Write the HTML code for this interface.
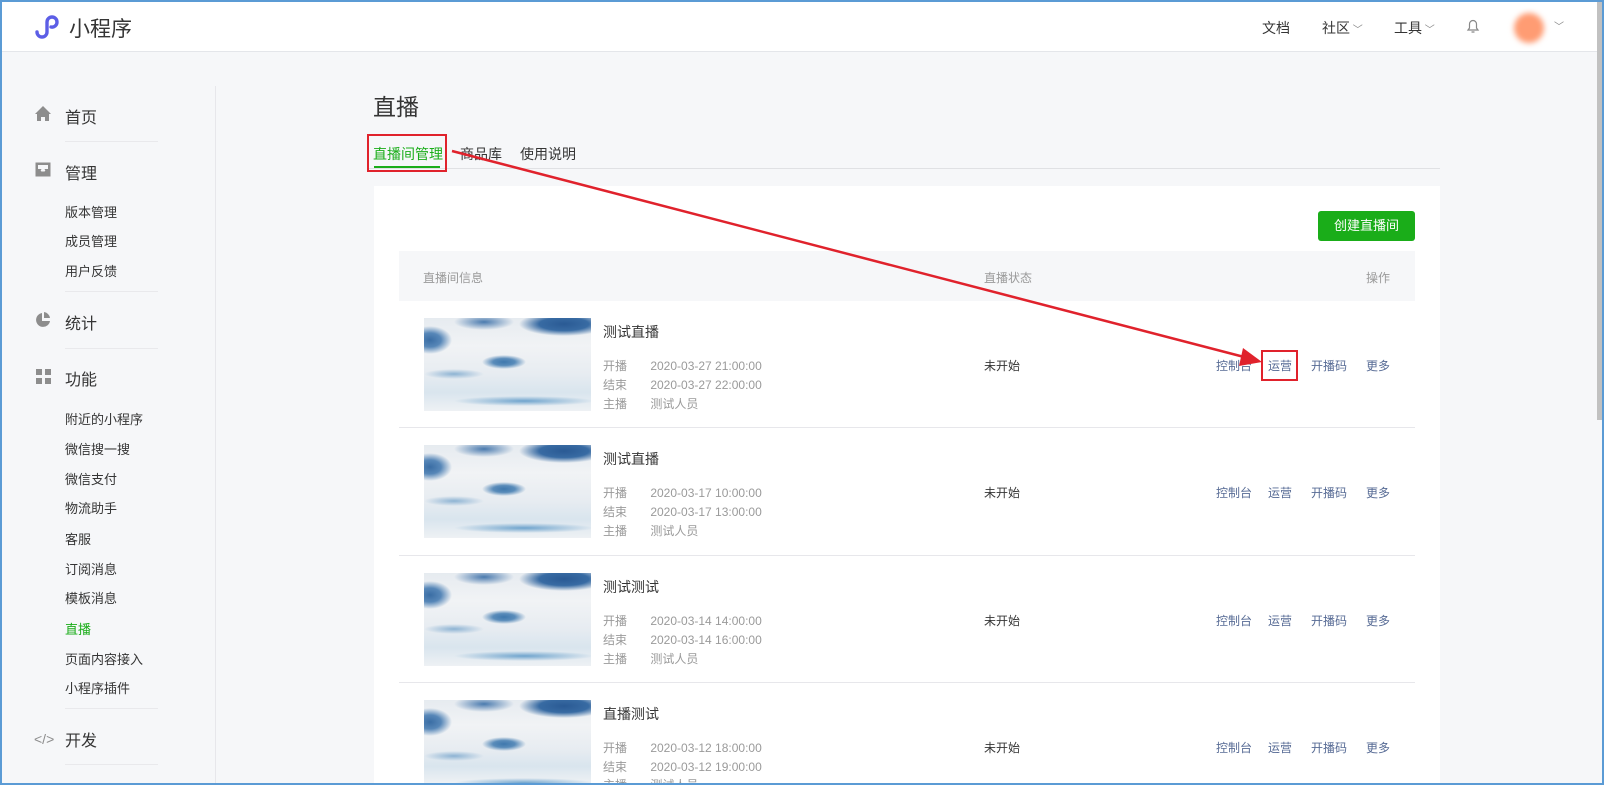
<!DOCTYPE html>
<html style="height:785px;overflow:hidden"><head><meta charset="utf-8"><style>
*{margin:0;padding:0;box-sizing:border-box}
body{width:1604px;height:785px;overflow:hidden;background:#f6f7f9;font-family:"Liberation Sans","Noto Sans CJK SC",sans-serif;position:relative;color:#353535}
.a{position:absolute;white-space:nowrap}
.hdr{left:0;top:0;width:1604px;height:52px;background:#fff;border-bottom:1px solid #e4e6ea}
.nav{font-size:14px;color:#353535;top:18px}
.side{font-size:16px;color:#353535}
.sub{font-size:13px;color:#353535}
.dv{height:1px;background:#e9e9ec;left:65px;width:93px}
.card{left:374px;top:186px;width:1066px;height:597px;background:#fff;overflow:hidden}
.th{left:399px;top:251px;width:1016px;height:50px;background:#f6f7f9}
.img{width:167px;height:93px;overflow:hidden;background:
radial-gradient(ellipse 22px 7px at 80px 44px,#3f78ad 0,#5a8cba 50%,transparent 100%),
radial-gradient(ellipse 45px 12px at 140px 6px,#2a5a94 0,#386ba3 55%,transparent 100%),
radial-gradient(ellipse 30px 8px at 60px 4px,#4a7aae 0,transparent 100%),
radial-gradient(ellipse 22px 14px at 6px 22px,#3a6da4 0,#5787b8 50%,transparent 100%),
radial-gradient(ellipse 30px 5px at 30px 56px,#8db3d3 0,transparent 100%),
radial-gradient(ellipse 70px 5px at 100px 83px,#6fa4cd 0,transparent 100%),
linear-gradient(180deg,#e6ebf0 0,#f1f3f5 30%,#e7ecf1 60%,#d9e5ee 80%,#eef1f4 100%)}
.t{font-size:14px;color:#353535}
.l{font-size:12px;color:#9a9a9a}
.op{font-size:12px;color:#576b95}
.st{font-size:12px;color:#353535}
.sep{left:399px;width:1016px;height:1px;background:#e7e7eb}
</style></head><body>
<div class="a hdr"></div>
<svg class="a" style="left:33px;top:12px" width="30" height="30" viewBox="0 0 30 30"><path d="M4 20a5 5 0 1 0 10 0V10a5 5 0 1 1 10 0a5 5 0 0 1-6 5" fill="none" stroke="#5c5ee6" stroke-width="3.4" stroke-linecap="round"/></svg>
<div class="a" style="left:69px;top:13px;font-size:21px;color:#353535">小程序</div>
<div class="a nav" style="left:1262px">文档</div>
<div class="a nav" style="left:1322px">社区<span style="font-size:10px;color:#888"> ﹀</span></div>
<div class="a nav" style="left:1394px">工具<span style="font-size:10px;color:#888"> ﹀</span></div>
<svg class="a" style="left:1466px;top:18px" width="14" height="16" viewBox="0 0 14 16"><path d="M2 12h10l-1.5-2V6a3.5 3.5 0 0 0-7 0v4zM5.5 14h3" fill="none" stroke="#888" stroke-width="1.2"/></svg>
<div class="a" style="left:1514px;top:13px;width:30px;height:30px;border-radius:50%;background:#ff9c73;filter:blur(3px)"></div>
<div class="a" style="left:1554px;top:18px;font-size:10px;color:#888">﹀</div>

<div class="a" style="left:215px;top:86px;width:1px;height:700px;background:#e7e7eb"></div>
<svg class="a" style="left:35px;top:106px" width="16" height="15" viewBox="0 0 16 15"><path d="M8 0L0 8h2v7h4v-4h4v4h4V8h2z" fill="#8d8d8d"/></svg>
<div class="a side" style="left:65px;top:104px">首页</div>
<div class="a dv" style="top:141px"></div>
<svg class="a" style="left:35px;top:162px" width="16" height="15" viewBox="0 0 16 15"><path d="M1 1h14v13H1zM1 8h4l1 2h4l1-2h4" fill="#8d8d8d" stroke="#8d8d8d"/><path d="M3 3h10v4h-3l-1 2H7L6 7H3z" fill="#f6f7f9"/></svg>
<div class="a side" style="left:65px;top:160px">管理</div>
<div class="a sub" style="left:65px;top:202px">版本管理</div>
<div class="a sub" style="left:65px;top:231px">成员管理</div>
<div class="a sub" style="left:65px;top:261px">用户反馈</div>
<div class="a dv" style="top:291px"></div>
<svg class="a" style="left:35px;top:312px" width="16" height="16" viewBox="0 0 16 16"><path d="M7 1a7 7 0 1 0 8 8H7z" fill="#8d8d8d"/><path d="M9 0v6h6A7 7 0 0 0 9 0z" fill="#8d8d8d"/></svg>
<div class="a side" style="left:65px;top:310px">统计</div>
<div class="a dv" style="top:348px"></div>
<svg class="a" style="left:36px;top:369px" width="15" height="15" viewBox="0 0 15 15"><path d="M0 0h6v6H0zM9 0h6v6H9zM0 9h6v6H0zM9 9h6v6H9z" fill="#8d8d8d"/></svg>
<div class="a side" style="left:65px;top:366px">功能</div>
<div class="a sub" style="left:65px;top:409px">附近的小程序</div>
<div class="a sub" style="left:65px;top:439px">微信搜一搜</div>
<div class="a sub" style="left:65px;top:469px">微信支付</div>
<div class="a sub" style="left:65px;top:498px">物流助手</div>
<div class="a sub" style="left:65px;top:529px">客服</div>
<div class="a sub" style="left:65px;top:559px">订阅消息</div>
<div class="a sub" style="left:65px;top:588px">模板消息</div>
<div class="a sub" style="left:65px;top:619px;color:#1aad19">直播</div>
<div class="a sub" style="left:65px;top:649px">页面内容接入</div>
<div class="a sub" style="left:65px;top:678px">小程序插件</div>
<div class="a dv" style="top:708px"></div>
<div class="a" style="left:34px;top:731px;font-size:14px;color:#8d8d8d">&lt;/&gt;</div>
<div class="a side" style="left:65px;top:727px">开发</div>
<div class="a dv" style="top:764px"></div>

<div class="a" style="left:373px;top:88px;font-size:23px;color:#353535">直播</div>
<div class="a" style="left:367px;top:168px;width:1073px;height:1px;background:#e0e1e4"></div>
<div class="a" style="left:373px;top:144px;font-size:14px;color:#1aad19">直播间管理</div>
<div class="a" style="left:374px;top:166px;width:66px;height:2px;background:#1aad19"></div>
<div class="a" style="left:367px;top:134px;width:80px;height:38px;border:2px solid #e0222c"></div>
<div class="a" style="left:460px;top:144px;font-size:14px">商品库</div>
<div class="a" style="left:520px;top:144px;font-size:14px">使用说明</div>

<div class="a card"></div>
<div class="a" style="left:1318px;top:211px;width:97px;height:30px;background:#1aad19;border-radius:3px;color:#fff;font-size:13px;text-align:center;line-height:30px">创建直播间</div>
<div class="a th"></div>
<div class="a l" style="left:423px;top:269px">直播间信息</div>
<div class="a l" style="left:984px;top:269px">直播状态</div>
<div class="a l" style="left:1366px;top:269px">操作</div>

<div class="a img" style="left:424px;top:318px"></div>
<div class="a t" style="left:603px;top:322px">测试直播</div>
<div class="a l" style="left:603px;top:357px">开播&nbsp;&nbsp;&nbsp;&nbsp;&nbsp;&nbsp;&nbsp;2020-03-27 21:00:00</div>
<div class="a l" style="left:603px;top:376px">结束&nbsp;&nbsp;&nbsp;&nbsp;&nbsp;&nbsp;&nbsp;2020-03-27 22:00:00</div>
<div class="a l" style="left:603px;top:395px">主播&nbsp;&nbsp;&nbsp;&nbsp;&nbsp;&nbsp;&nbsp;测试人员</div>
<div class="a st" style="left:984px;top:357px">未开始</div>
<div class="a op" style="left:1216px;top:357px">控制台</div><div class="a op" style="left:1268px;top:357px">运营</div><div class="a op" style="left:1311px;top:357px">开播码</div><div class="a op" style="left:1366px;top:357px">更多</div>
<div class="a sep" style="top:427px"></div>

<div class="a img" style="left:424px;top:445px"></div>
<div class="a t" style="left:603px;top:449px">测试直播</div>
<div class="a l" style="left:603px;top:484px">开播&nbsp;&nbsp;&nbsp;&nbsp;&nbsp;&nbsp;&nbsp;2020-03-17 10:00:00</div>
<div class="a l" style="left:603px;top:503px">结束&nbsp;&nbsp;&nbsp;&nbsp;&nbsp;&nbsp;&nbsp;2020-03-17 13:00:00</div>
<div class="a l" style="left:603px;top:522px">主播&nbsp;&nbsp;&nbsp;&nbsp;&nbsp;&nbsp;&nbsp;测试人员</div>
<div class="a st" style="left:984px;top:484px">未开始</div>
<div class="a op" style="left:1216px;top:484px">控制台</div><div class="a op" style="left:1268px;top:484px">运营</div><div class="a op" style="left:1311px;top:484px">开播码</div><div class="a op" style="left:1366px;top:484px">更多</div>
<div class="a sep" style="top:555px"></div>

<div class="a img" style="left:424px;top:573px"></div>
<div class="a t" style="left:603px;top:577px">测试测试</div>
<div class="a l" style="left:603px;top:612px">开播&nbsp;&nbsp;&nbsp;&nbsp;&nbsp;&nbsp;&nbsp;2020-03-14 14:00:00</div>
<div class="a l" style="left:603px;top:631px">结束&nbsp;&nbsp;&nbsp;&nbsp;&nbsp;&nbsp;&nbsp;2020-03-14 16:00:00</div>
<div class="a l" style="left:603px;top:650px">主播&nbsp;&nbsp;&nbsp;&nbsp;&nbsp;&nbsp;&nbsp;测试人员</div>
<div class="a st" style="left:984px;top:612px">未开始</div>
<div class="a op" style="left:1216px;top:612px">控制台</div><div class="a op" style="left:1268px;top:612px">运营</div><div class="a op" style="left:1311px;top:612px">开播码</div><div class="a op" style="left:1366px;top:612px">更多</div>
<div class="a sep" style="top:682px"></div>

<div class="a img" style="left:424px;top:700px;height:83px"></div>
<div class="a t" style="left:603px;top:704px">直播测试</div>
<div class="a l" style="left:603px;top:739px">开播&nbsp;&nbsp;&nbsp;&nbsp;&nbsp;&nbsp;&nbsp;2020-03-12 18:00:00</div>
<div class="a l" style="left:603px;top:758px">结束&nbsp;&nbsp;&nbsp;&nbsp;&nbsp;&nbsp;&nbsp;2020-03-12 19:00:00</div>
<div class="a l" style="left:603px;top:776px;height:7px;overflow:hidden">主播&nbsp;&nbsp;&nbsp;&nbsp;&nbsp;&nbsp;&nbsp;测试人员</div>
<div class="a st" style="left:984px;top:739px">未开始</div>
<div class="a op" style="left:1216px;top:739px">控制台</div><div class="a op" style="left:1268px;top:739px">运营</div><div class="a op" style="left:1311px;top:739px">开播码</div><div class="a op" style="left:1366px;top:739px">更多</div>

<div class="a" style="left:1261px;top:350px;width:37px;height:31px;border:2px solid #e0222c"></div>
<svg class="a" style="left:0;top:0" width="1604" height="785"><line x1="452" y1="151" x2="1248" y2="358" stroke="#e0222c" stroke-width="2.5"/><polygon points="1262,362 1243,348 1239,366" fill="#e0222c"/></svg>

<div class="a" style="left:1597px;top:0;width:5px;height:420px;background:#c1c1c1"></div>
<div class="a" style="left:0;top:0;width:1604px;height:785px;border:2px solid #5b9bd5"></div>
</body></html>
